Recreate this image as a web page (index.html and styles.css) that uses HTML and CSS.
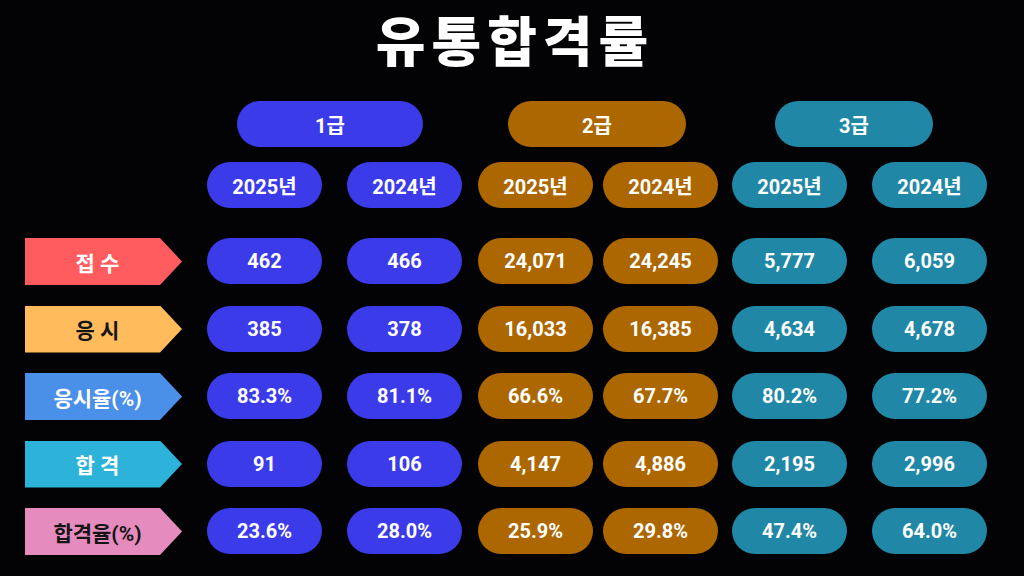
FILE: index.html
```html
<!DOCTYPE html>
<html lang="ko">
<head>
<meta charset="utf-8">
<link rel="stylesheet" href="styles.css">
</head>
<body>
<div class="page">
  <h1 class="title">유통합격률</h1>
  <div class="grid">
    <div class="head g1 h1">1급</div>
    <div class="head g2 h2">2급</div>
    <div class="head g3 h3">3급</div>

    <div class="cell"></div>
    <div class="cell"><span class="pill g1">2025년</span></div>
    <div class="cell"><span class="pill g1">2024년</span></div>
    <div class="cell"><span class="pill g2">2025년</span></div>
    <div class="cell"><span class="pill g2">2024년</span></div>
    <div class="cell"><span class="pill g3">2025년</span></div>
    <div class="cell"><span class="pill g3">2024년</span></div>

    <div class="cell"><span class="label l-red">접 수</span></div>
    <div class="cell"><span class="pill g1">462</span></div>
    <div class="cell"><span class="pill g1">466</span></div>
    <div class="cell"><span class="pill g2">24,071</span></div>
    <div class="cell"><span class="pill g2">24,245</span></div>
    <div class="cell"><span class="pill g3">5,777</span></div>
    <div class="cell"><span class="pill g3">6,059</span></div>

    <div class="cell"><span class="label l-yellow">응 시</span></div>
    <div class="cell"><span class="pill g1">385</span></div>
    <div class="cell"><span class="pill g1">378</span></div>
    <div class="cell"><span class="pill g2">16,033</span></div>
    <div class="cell"><span class="pill g2">16,385</span></div>
    <div class="cell"><span class="pill g3">4,634</span></div>
    <div class="cell"><span class="pill g3">4,678</span></div>

    <div class="cell"><span class="label l-blue">응시율(%)</span></div>
    <div class="cell"><span class="pill g1">83.3%</span></div>
    <div class="cell"><span class="pill g1">81.1%</span></div>
    <div class="cell"><span class="pill g2">66.6%</span></div>
    <div class="cell"><span class="pill g2">67.7%</span></div>
    <div class="cell"><span class="pill g3">80.2%</span></div>
    <div class="cell"><span class="pill g3">77.2%</span></div>

    <div class="cell"><span class="label l-cyan">합 격</span></div>
    <div class="cell"><span class="pill g1">91</span></div>
    <div class="cell"><span class="pill g1">106</span></div>
    <div class="cell"><span class="pill g2">4,147</span></div>
    <div class="cell"><span class="pill g2">4,886</span></div>
    <div class="cell"><span class="pill g3">2,195</span></div>
    <div class="cell"><span class="pill g3">2,996</span></div>

    <div class="cell"><span class="label l-pink">합격율(%)</span></div>
    <div class="cell"><span class="pill g1">23.6%</span></div>
    <div class="cell"><span class="pill g1">28.0%</span></div>
    <div class="cell"><span class="pill g2">25.9%</span></div>
    <div class="cell"><span class="pill g2">29.8%</span></div>
    <div class="cell"><span class="pill g3">47.4%</span></div>
    <div class="cell"><span class="pill g3">64.0%</span></div>
  </div>
</div>
</body>
</html>
```

FILE: styles.css
```css
* { box-sizing: border-box; }
html, body {
  margin: 0;
  padding: 0;
  background: #030305;
}
body {
  width: 1024px;
  height: 576px;
  overflow: hidden;
  font-family: Roboto, "Noto Sans CJK KR", sans-serif;
  color: #fff;
}
.page {
  padding: 0 0 0 25px;
}
.title {
  margin: 0;
  height: 101px;
  padding-top: 0;
  padding-right: 25px;
  text-align: center;
  font-family: "Noto Sans CJK KR", sans-serif;
  font-weight: 900;
  font-size: 54px;
  line-height: 78px;
  letter-spacing: 6px;
  text-indent: 6px;
  color: #fff;
}
.grid {
  display: grid;
  grid-template-columns: 182px 140px 131px 125px 129px 140px 115px;
  grid-template-rows: 46px 46px 46px 46px 46px 46px 46px;
  row-gap: 21.5px;
}
.grid > .cell:nth-child(4),
.grid > .cell:nth-child(5),
.grid > .cell:nth-child(6),
.grid > .cell:nth-child(7),
.grid > .cell:nth-child(8),
.grid > .cell:nth-child(9),
.grid > .cell:nth-child(10) {
  margin-top: -6.5px;
}
.grid > .cell:nth-child(n+11) {
  margin-top: 2px;
}
.cell {
  display: flex;
  align-items: stretch;
}
.head {
  display: flex;
  align-items: center;
  justify-content: center;
  height: 46px;
  border-radius: 23px;
  font-size: 20px;
  font-weight: 700;
}
.h1 { grid-column: 2 / 4; margin-left: 30px; width: 186px; }
.h2 { grid-column: 4 / 6; margin-left: 30px; width: 178px; }
.h3 { grid-column: 6 / 8; margin-left: 43px; width: 158px; }
.pill {
  display: flex;
  align-items: center;
  justify-content: center;
  width: 115px;
  height: 46px;
  border-radius: 23px;
  font-size: 20px;
  font-weight: 700;
  color: #fff;
}
.g1 { background: #3b3bea; }
.g2 { background: #ad6700; }
.g3 { background: #2187a6; }
.label {
  display: flex;
  align-items: center;
  justify-content: center;
  width: 157px;
  height: 47px;
  padding-right: 12px;
  font-family: Roboto, "Noto Sans CJK KR", sans-serif;
  font-size: 21px;
  font-weight: 700;
  clip-path: polygon(0 0, 135px 0, 157px 50%, 135px 100%, 0 100%);
}
.l-red { background: #ff5c60; color: #fff; }
.l-yellow { background: #ffbb5c; color: #151515; }
.l-blue { background: #4a90e8; color: #fff; }
.l-cyan { background: #2db3d9; color: #fff; }
.l-pink { background: #e68bbe; color: #151515; }
```
